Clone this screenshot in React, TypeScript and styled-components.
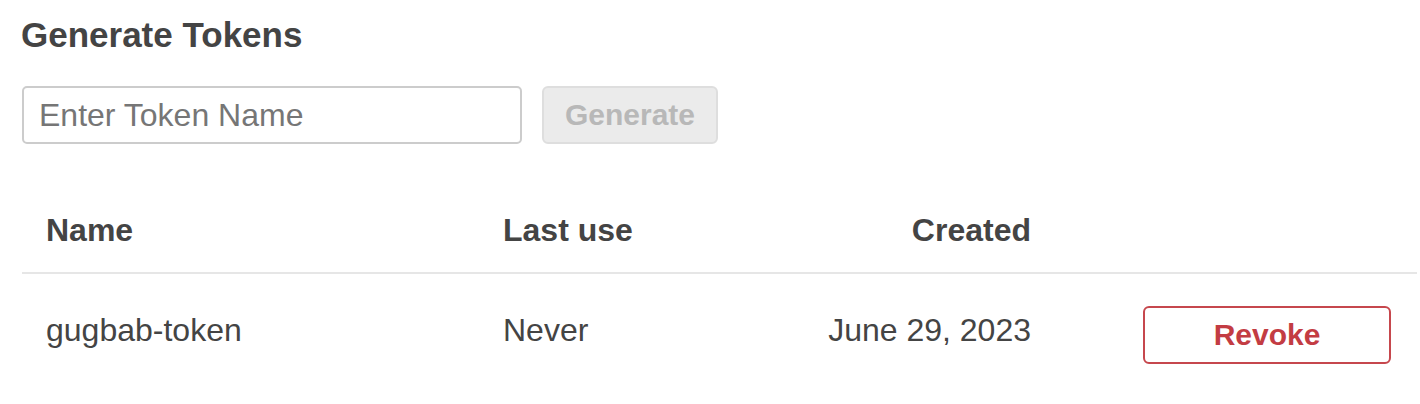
import { Fragment } from "react";
import styled, { createGlobalStyle } from "styled-components";

const GlobalStyle = createGlobalStyle`
  body {
    margin: 0;
    background: #ffffff;
    font-family: "Liberation Sans", Arial, Helvetica, sans-serif;
    color: #444444;
  }
`;

const Page = styled.div`
  width: 1395px;
  padding: 14px 0 0 22px;
`;

const Title = styled.h2`
  margin: 0 0 30px -1px;
  font-size: 35px;
  line-height: 42px;
  font-weight: 700;
  color: #444444;
`;

const Form = styled.form`
  display: flex;
  align-items: center;
  gap: 20px;
`;

const NameInput = styled.input`
  box-sizing: border-box;
  width: 500px;
  height: 58px;
  padding: 0 15px;
  border: 2px solid #cccccc;
  border-radius: 5px;
  font-family: inherit;
  font-size: 32px;
  color: #444444;
  outline: none;

  &::placeholder {
    color: #767676;
  }
`;

const Button = styled.button<{ $tone: "muted" | "danger" }>`
  box-sizing: border-box;
  height: 58px;
  border-radius: 6px;
  font-family: inherit;
  font-size: 30px;
  font-weight: 700;
  cursor: pointer;
  background: ${(p) => (p.$tone === "muted" ? "#ebebeb" : "#ffffff")};
  border: 2px solid ${(p) => (p.$tone === "muted" ? "#dedede" : "#c6474d")};
  color: ${(p) => (p.$tone === "muted" ? "#b8b8b8" : "#c33c43")};
`;

const GenerateButton = styled(Button)`
  width: 176px;
`;

const RevokeButton = styled(Button)`
  width: 248px;
  height: 58px;
`;

const Table = styled.div`
  margin-top: 44px;
  display: grid;
  grid-template-columns: 457px 300px 276px 362px;
`;

const HeadCell = styled.div<{ $align?: "left" | "right" }>`
  padding: 24px 24px 24px;
  font-size: 32px;
  line-height: 36px;
  font-weight: 700;
  text-align: ${(p) => p.$align ?? "left"};
  border-bottom: 2px solid #e6e6e6;
`;

const Cell = styled.div<{ $align?: "left" | "right" }>`
  padding: 32px 24px;
  font-size: 32px;
  line-height: 48px;
  text-align: ${(p) => p.$align ?? "left"};
`;

const ActionCell = styled.div`
  display: flex;
  justify-content: flex-end;
  padding: 32px 26px 32px 0;
`;

const tokens = [{ name: "gugbab-token", lastUse: "Never", created: "June 29, 2023" }];

export default function App() {
  return (
    <>
      <GlobalStyle />
      <Page>
        <Title>Generate Tokens</Title>
        <Form onSubmit={(e) => e.preventDefault()}>
          <NameInput type="text" placeholder="Enter Token Name" />
          <GenerateButton $tone="muted" type="submit" disabled>
            Generate
          </GenerateButton>
        </Form>
        <Table>
          <HeadCell>Name</HeadCell>
          <HeadCell>Last use</HeadCell>
          <HeadCell $align="right">Created</HeadCell>
          <HeadCell />
          {tokens.map((t) => (
            <Fragment key={t.name}>
              <Cell>{t.name}</Cell>
              <Cell>{t.lastUse}</Cell>
              <Cell $align="right">{t.created}</Cell>
              <ActionCell>
                <RevokeButton $tone="danger" type="button">
                  Revoke
                </RevokeButton>
              </ActionCell>
            </Fragment>
          ))}
        </Table>
      </Page>
    </>
  );
}
